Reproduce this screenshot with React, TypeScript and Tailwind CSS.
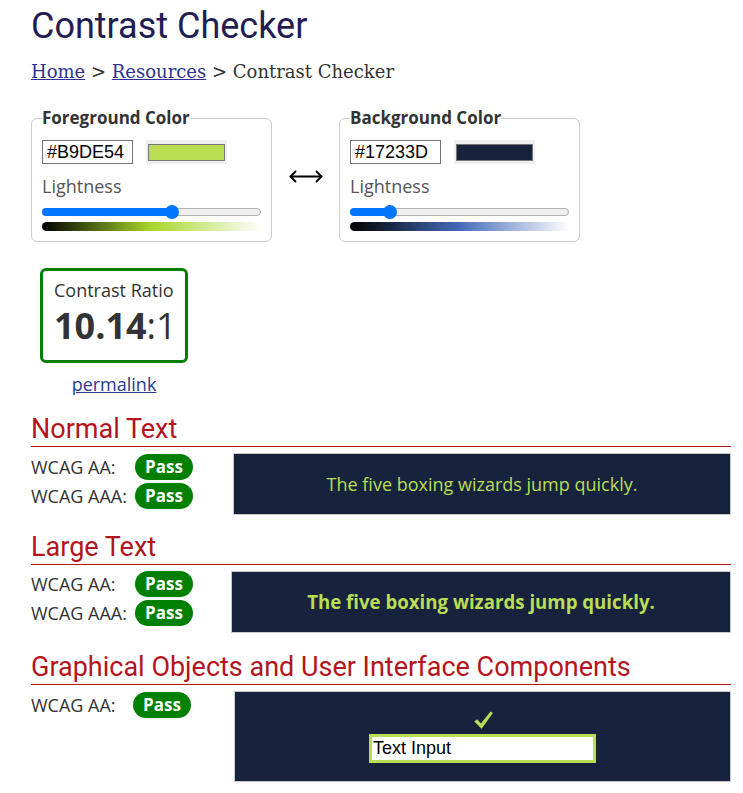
import React from 'react';

interface ColorPanelProps {
  title: string;
  hex: string;
  lightness: number;
  midColor: string;
}

function LightnessSlider({ value }: { value: number }) {
  // track is 219px wide, thumb center travels across it
  const center = 7 + (value / 100) * 205;
  return (
    <div className="relative h-[16px] w-[219px]">
      <div className="absolute left-0 right-0 top-[4px] h-[8px] rounded-full border border-[#b2b2b2] bg-[#efefef]" />
      <div className="absolute left-0 top-[4px] h-[8px] rounded-l-full bg-[#0075ff]" style={{ width: center }} />
      <div className="absolute top-[1px] h-[14px] w-[14px] rounded-full bg-[#0075ff]" style={{ left: center - 7 }} />
    </div>
  );
}

function ColorPanel({ title, hex, lightness, midColor }: ColorPanelProps) {
  return (
    <fieldset className="w-[241px] rounded-[6px] border border-[#cccccc] px-[10px] pb-[10px]">
      <legend className="p-0 text-[17px] font-bold leading-[24px] text-[#333]">{title}</legend>
      <div className="mt-[10px] flex items-center gap-[13px]">
        <input
          readOnly
          value={hex}
          className="h-[24px] w-[91px] border border-[#767676] bg-white pl-[4px] font-['Liberation_Sans',Arial,sans-serif] text-[18px] text-black outline-none"
        />
        <div className="h-[24px] w-[81px] bg-[#efefef] px-[2px] pb-[3px] pt-[4px]">
          <div className="h-full w-full border border-[#767676]" style={{ backgroundColor: hex }} />
        </div>
      </div>
      <div className="mt-[10px] text-[18px] leading-[24px] text-[#555]">Lightness</div>
      <div className="mt-[6px]">
        <LightnessSlider value={lightness} />
      </div>
      <div
        className="mt-[2px] h-[9px] w-[219px] rounded-l-full"
        style={{ background: `linear-gradient(to right, #000, ${midColor}, #fff)` }}
      />
    </fieldset>
  );
}

function Pass() {
  return (
    <span className="inline-flex h-[26px] w-[58px] items-center justify-center rounded-full bg-[#008000] text-[17px] font-bold leading-none text-white">
      Pass
    </span>
  );
}

function ResultRow({ label, labelWidth }: { label: string; labelWidth: string }) {
  return (
    <div className="flex h-[29px] items-center">
      <span className={`${labelWidth} text-[18px] leading-[24px] text-[#333]`}>{label}</span>
      <Pass />
    </div>
  );
}

function SectionTitle({ children, spacing }: { children: React.ReactNode; spacing: string }) {
  return (
    <h2
      className={`${spacing} border-b border-[#b5141c] pb-[1px] font-['Roboto',sans-serif] text-[27px] leading-[32px] text-[#b5141c]`}
    >
      {children}
    </h2>
  );
}

export default function App() {
  return (
    <div className="min-h-screen bg-white pb-[12px] pl-[31px] pr-[12px] font-['Open_Sans',sans-serif] text-[#333]">
      <h1 className="pt-[5px] font-['Roboto',sans-serif] text-[36px] font-normal leading-[42px] text-[#211d52]">
        Contrast Checker
      </h1>

      {/* Breadcrumb */}
      <nav className="mt-[13px] font-['DejaVu_Serif',serif] text-[18px] leading-[24px] text-[#333]">
        <a href="#" className="text-[#2e3192] underline">Home</a>
        {' > '}
        <a href="#" className="text-[#2e3192] underline">Resources</a>
        {' > Contrast Checker'}
      </nav>

      {/* Color pickers */}
      <div className="mt-[22px] flex items-center">
        <ColorPanel title="Foreground Color" hex="#B9DE54" lightness={60} midColor="#a8d629" />
        <div className="ml-[17px] mr-[16px] mt-[5px]">
          <svg width="34" height="13" viewBox="0 0 34 13" fill="none" stroke="#000" strokeWidth="1.8" strokeLinecap="round" strokeLinejoin="round">
            <path d="M1.5 6.5H32.5" />
            <path d="M6.5 1.5L1.5 6.5L6.5 11.5" />
            <path d="M27.5 1.5L32.5 6.5L27.5 11.5" />
          </svg>
        </div>
        <ColorPanel title="Background Color" hex="#17233D" lightness={16} midColor="#466ab9" />
      </div>

      {/* Ratio */}
      <div className="ml-[9px] mt-[26px] h-[95px] w-[148px] rounded-[6px] border-[3px] border-[#008000] pl-[11px] pt-[7px]">
        <div className="text-[18px] leading-[24px] text-[#333]">Contrast Ratio</div>
        <div className="mt-[2px] text-[36px] leading-[44px] text-[#333]">
          <span className="font-bold">10.14</span>:1
        </div>
      </div>
      <div className="ml-[9px] mt-[9px] w-[148px] text-center text-[18px] leading-[24px]">
        <a href="#" className="text-[#2b3990] underline">permalink</a>
      </div>

      {/* Normal text */}
      <SectionTitle spacing="mt-[17px]">Normal Text</SectionTitle>
      <div className="mt-[5px] flex items-start">
        <div className="w-[202px]">
          <ResultRow label="WCAG AA:" labelWidth="w-[104px]" />
          <ResultRow label="WCAG AAA:" labelWidth="w-[104px]" />
        </div>
        <div className="mt-[1px] flex h-[62px] flex-1 items-center justify-center border border-[#c8c8c8] bg-[#17233D] text-[18px] text-[#B9DE54]">
          The five boxing wizards jump quickly.
        </div>
      </div>

      {/* Large text */}
      <SectionTitle spacing="mt-[16px]">Large Text</SectionTitle>
      <div className="mt-[4px] flex items-start">
        <div className="w-[200px]">
          <ResultRow label="WCAG AA:" labelWidth="w-[104px]" />
          <ResultRow label="WCAG AAA:" labelWidth="w-[104px]" />
        </div>
        <div className="mt-[2px] flex h-[62px] flex-1 items-center justify-center border border-[#c8c8c8] bg-[#17233D] text-[18.67px] font-bold text-[#B9DE54]">
          The five boxing wizards jump quickly.
        </div>
      </div>

      {/* Graphical objects */}
      <SectionTitle spacing="mt-[18px]">Graphical Objects and User Interface Components</SectionTitle>
      <div className="mt-[5px] flex items-start">
        <div className="w-[203px]">
          <ResultRow label="WCAG AA:" labelWidth="w-[102px]" />
        </div>
        <div className="mt-[1px] flex h-[91px] flex-1 flex-col items-center border border-[#c8c8c8] bg-[#17233D] pt-[19px]">
          <svg width="19" height="18" viewBox="0 0 19 18" className="ml-[1px]">
            <path d="M0.3 10.6L3.2 8.3L6.9 12.4L16.6 0.4L18.9 1.9L7.6 17.7Z" fill="#B9DE54" />
          </svg>
          <input
            readOnly
            value="Text Input"
            className="mt-[5px] h-[29px] w-[227px] border-[3px] border-[#B9DE54] bg-white pl-[1px] font-['Liberation_Sans',Arial,sans-serif] text-[18px] text-black outline-none"
          />
        </div>
      </div>
    </div>
  );
}
